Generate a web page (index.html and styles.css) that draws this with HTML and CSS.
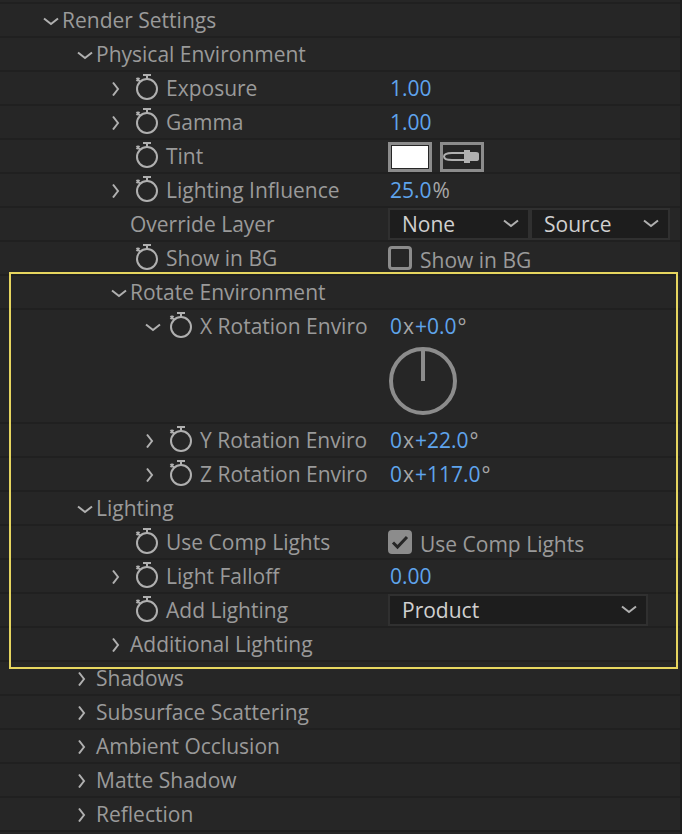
FILE: index.html
```html
<!DOCTYPE html>
<html lang="en">
<head>
<meta charset="utf-8">
<title>Render Settings</title>
<link rel="stylesheet" href="styles.css">
</head>
<body>
<svg class="defs" aria-hidden="true">
  <symbol id="right" viewBox="0 0 16 16"><path d="M2 2.500l5 6.500-5 6.500"/></symbol>
  <symbol id="down" viewBox="0 0 16 16"><path d="M1 6.500l7 5.500 7-5.500"/></symbol>
  <symbol id="watch" viewBox="0 0 24 28"><circle cx="12" cy="15" r="10"/><path d="M8 1h8M12 1v4M1.500 4l4 4M1.500 7l3-3"/></symbol>
</svg>
<main class="panel">
  <div class="row l0"><div class="name"><button class="twirl" aria-label="Collapse Render Settings"><svg><use href="#down"/></svg></button><span>Render Settings</span></div></div>
  <div class="row l1"><div class="name"><button class="twirl" aria-label="Collapse Physical Environment"><svg><use href="#down"/></svg></button><span>Physical Environment</span></div></div>
  <div class="row l2"><div class="name"><button class="twirl" aria-label="Expand Exposure"><svg><use href="#right"/></svg></button><button class="watch" aria-label="Animate Exposure"><svg><use href="#watch"/></svg></button><span>Exposure</span></div><div class="value"><button class="hot">1.00</button></div></div>
  <div class="row l2"><div class="name"><button class="twirl" aria-label="Expand Gamma"><svg><use href="#right"/></svg></button><button class="watch" aria-label="Animate Gamma"><svg><use href="#watch"/></svg></button><span>Gamma</span></div><div class="value"><button class="hot">1.00</button></div></div>
  <div class="row l2"><div class="name"><span class="twirl"></span><button class="watch" aria-label="Animate Tint"><svg><use href="#watch"/></svg></button><span>Tint</span></div><div class="value tint"><button class="swatch" aria-label="Tint color"></button><button class="dropper" aria-label="Pick tint color"><svg viewBox="0 0 38 24"><path d="M22 8H9C4 8 1 9.500 1 11.500S4 15 9 15h13"/><path class="fill" d="M21 5h6v2h6q3 0 3 2v5q0 2-3 2h-6v2h-6z"/></svg></button></div></div>
  <div class="row l2"><div class="name"><button class="twirl" aria-label="Expand Lighting Influence"><svg><use href="#right"/></svg></button><button class="watch" aria-label="Animate Lighting Influence"><svg><use href="#watch"/></svg></button><span>Lighting Influence</span></div><div class="value"><button class="hot">25.0</button><span class="unit">%</span></div></div>
  <div class="row l2"><div class="name"><span class="twirl"></span><label for="layer">Override Layer</label></div><div class="value menus"><div class="menu layer"><select id="layer"><option>None</option></select><svg aria-hidden="true"><use href="#down"/></svg></div><div class="menu source"><select aria-label="Layer source"><option>Source</option></select><svg aria-hidden="true"><use href="#down"/></svg></div></div></div>
  <div class="row l2"><div class="name"><span class="twirl"></span><button class="watch" aria-label="Animate Show in BG"><svg><use href="#watch"/></svg></button><span>Show in BG</span></div><div class="value"><label class="check"><input type="checkbox"><span>Show in BG</span></label></div></div>

  <section class="highlight">
    <div class="row l2"><div class="name"><button class="twirl" aria-label="Collapse Rotate Environment"><svg><use href="#down"/></svg></button><span>Rotate Environment</span></div></div>
    <div class="row l3 open"><div class="name"><button class="twirl" aria-label="Collapse X Rotation"><svg><use href="#down"/></svg></button><button class="watch" aria-label="Animate X Rotation"><svg><use href="#watch"/></svg></button><span>X Rotation Enviro</span></div><div class="value"><button class="hot">0</button><span class="unit">x</span><button class="hot">+0.0</button><span class="unit">°</span></div><div class="dial"><svg viewBox="0 0 70 70" role="img" aria-label="X rotation dial"><circle cx="35" cy="35" r="32"/><path d="M35 3v32"/></svg></div></div>
    <div class="row l3"><div class="name"><button class="twirl" aria-label="Expand Y Rotation"><svg><use href="#right"/></svg></button><button class="watch" aria-label="Animate Y Rotation"><svg><use href="#watch"/></svg></button><span>Y Rotation Enviro</span></div><div class="value"><button class="hot">0</button><span class="unit">x</span><button class="hot">+22.0</button><span class="unit">°</span></div></div>
    <div class="row l3"><div class="name"><button class="twirl" aria-label="Expand Z Rotation"><svg><use href="#right"/></svg></button><button class="watch" aria-label="Animate Z Rotation"><svg><use href="#watch"/></svg></button><span>Z Rotation Enviro</span></div><div class="value"><button class="hot">0</button><span class="unit">x</span><button class="hot">+117.0</button><span class="unit">°</span></div></div>
    <div class="row l1"><div class="name"><button class="twirl" aria-label="Collapse Lighting"><svg><use href="#down"/></svg></button><span>Lighting</span></div></div>
    <div class="row l2"><div class="name"><span class="twirl"></span><button class="watch" aria-label="Animate Use Comp Lights"><svg><use href="#watch"/></svg></button><span>Use Comp Lights</span></div><div class="value"><label class="check"><input type="checkbox" checked><svg class="tick" viewBox="0 0 24 24" aria-hidden="true"><path d="M5 12.500l4.500 4.500L19 7"/></svg><span>Use Comp Lights</span></label></div></div>
    <div class="row l2"><div class="name"><button class="twirl" aria-label="Expand Light Falloff"><svg><use href="#right"/></svg></button><button class="watch" aria-label="Animate Light Falloff"><svg><use href="#watch"/></svg></button><span>Light Falloff</span></div><div class="value"><button class="hot">0.00</button></div></div>
    <div class="row l2"><div class="name"><span class="twirl"></span><button class="watch" aria-label="Animate Add Lighting"><svg><use href="#watch"/></svg></button><label for="add">Add Lighting</label></div><div class="value menus"><div class="menu product"><select id="add"><option>Product</option></select><svg aria-hidden="true"><use href="#down"/></svg></div></div></div>
    <div class="row l2"><div class="name"><button class="twirl" aria-label="Expand Additional Lighting"><svg><use href="#right"/></svg></button><span>Additional Lighting</span></div></div>
  </section>

  <div class="row l1"><div class="name"><button class="twirl" aria-label="Expand Shadows"><svg><use href="#right"/></svg></button><span>Shadows</span></div></div>
  <div class="row l1"><div class="name"><button class="twirl" aria-label="Expand Subsurface Scattering"><svg><use href="#right"/></svg></button><span>Subsurface Scattering</span></div></div>
  <div class="row l1"><div class="name"><button class="twirl" aria-label="Expand Ambient Occlusion"><svg><use href="#right"/></svg></button><span>Ambient Occlusion</span></div></div>
  <div class="row l1"><div class="name"><button class="twirl" aria-label="Expand Matte Shadow"><svg><use href="#right"/></svg></button><span>Matte Shadow</span></div></div>
  <div class="row l1"><div class="name"><button class="twirl" aria-label="Expand Reflection"><svg><use href="#right"/></svg></button><span>Reflection</span></div></div>
</main>
</body>
</html>
```
FILE: styles.css
```css
*, ::before, ::after { box-sizing: border-box; }
body { margin: 0; background: #262626; color: #9a9a9a; font: 500 21px/32px "Open Sans", "Noto Sans", sans-serif; }
button, select { margin: 0; padding: 0; border: 0; background: none; font: inherit; color: inherit; }
svg { display: block; fill: none; stroke: #b0b0b0; stroke-width: 2; }
.defs { position: absolute; width: 0; height: 0; }
.panel { min-height: 100vh; border-right: 2px solid #1d1d1d; }
.panel::before { content: ""; display: block; height: 4px; border-bottom: 2px solid #202020; }

.row { display: grid; grid-template-columns: 388px 1fr; grid-template-rows: 32px; border-bottom: 2px solid #202020; white-space: nowrap; }
.row.open { grid-template-rows: 32px 80px; }
.name { display: flex; align-items: center; }
.l0 .name { padding-left: 42px; }
.l1 .name { padding-left: 76px; }
.l2 .name { padding-left: 110px; }
.l3 .name { padding-left: 144px; }
.twirl { flex: none; width: 20px; height: 16px; }
.twirl svg { width: 16px; height: 16px; margin-left: 1px; }
.watch { flex: none; width: 24px; height: 28px; margin: 0 7px 0 5px; }
.watch svg { width: 24px; height: 28px; }

.value { display: flex; align-items: center; padding-left: 2px; }
.hot { color: #5fa4ec; }
.unit { padding: 0 1px; color: #a8a8a8; }
.tint, .menus { padding-left: 0; }
.tint { gap: 8px; padding-top: 2px; }
.swatch, .dropper { width: 44px; height: 30px; border: 3px solid #8c8c8c; }
.swatch { background: #fff; box-shadow: inset 0 0 0 1px #262626; }
.dropper svg { width: 38px; height: 24px; }
.dropper .fill { fill: #b0b0b0; stroke: none; }

.menu { position: relative; height: 32px; }
.menu select { display: block; width: 100%; height: 32px; padding: 0 0 0 12px; appearance: none; border: 2px solid #303030; background: #1d1d1d; color: #d0d0d0; line-height: 28px; }
.menu svg { position: absolute; top: 6px; right: 11px; width: 16px; height: 16px; pointer-events: none; }
.layer { width: 142px; }
.source { width: 140px; }
.product { width: 260px; }

.check { position: relative; display: flex; align-items: center; gap: 8px; margin-left: -2px; }
.check span { padding-top: 4px; line-height: 28px; }
.check input { appearance: none; width: 24px; height: 24px; margin: 0; border: 3px solid #8c8c8c; border-radius: 4px; }
.check input:checked { background: #8c8c8c; }
.tick { position: absolute; left: 0; width: 24px; height: 24px; stroke: #262626; stroke-width: 3; }
.dial { grid-column: 2; }
.dial svg { width: 70px; height: 70px; margin-top: 4px; stroke: #8c8c8c; stroke-width: 4; }

.highlight { position: relative; }
.highlight::after { content: ""; position: absolute; inset: -4px 2px -7px 9px; border: 2px solid #e6d55f; pointer-events: none; }
```
